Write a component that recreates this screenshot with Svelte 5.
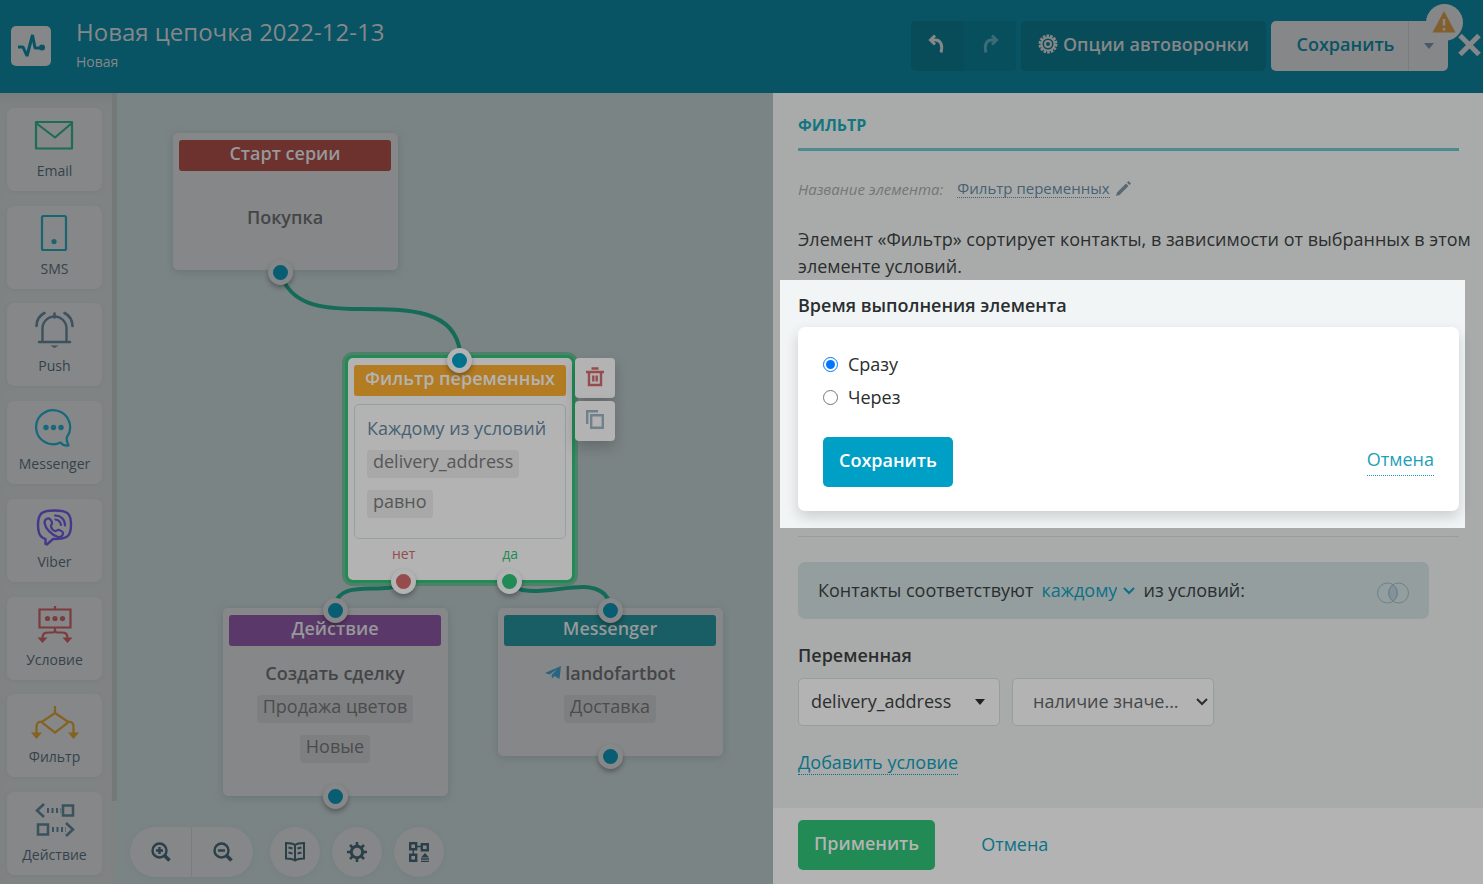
<script>
    let when = 'now';

    const tools = [
        { id: 'email', name: 'Email' },
        { id: 'sms', name: 'SMS' },
        { id: 'push', name: 'Push' },
        { id: 'messenger', name: 'Messenger' },
        { id: 'viber', name: 'Viber' },
        { id: 'condition', name: 'Условие' },
        { id: 'filter', name: 'Фильтр' },
        { id: 'action', name: 'Действие' }
    ];

    const nodes = [
        { type: 'start', title: 'Старт серии', text: 'Покупка', tags: [], x: 56, y: 40, w: 225, h: 137 },
        { type: 'filter', title: 'Фильтр переменных', text: 'Каждому из условий', tags: ['delivery_address', 'равно'], x: 231, y: 265, w: 224, h: 222 },
        { type: 'action', title: 'Действие', text: 'Создать сделку', tags: ['Продажа цветов', 'Новые'], x: 106, y: 515, w: 225, h: 188 },
        { type: 'messenger', title: 'Messenger', text: 'landofartbot', tags: ['Доставка'], x: 381, y: 515, w: 225, h: 148 }
    ];

    const edges = [
        'M163 179 C173 212 203 216 243 216 C293 216 338 217 343 259',
        'M286 490 C268 503 223 485 218 512',
        'M392 488 C403 507 443 493 468 494 C483 495 491 502 493 512'
    ];

    const ports = [
        { x: 163, y: 179, kind: 'dim' },
        { x: 342, y: 267, kind: 'in' },
        { x: 286, y: 488, kind: 'no' },
        { x: 392, y: 488, kind: 'yes' },
        { x: 218, y: 517, kind: 'dim' },
        { x: 493, y: 517, kind: 'dim' },
        { x: 218, y: 703, kind: 'dim' },
        { x: 493, y: 663, kind: 'dim' }
    ];
</script>

<div class="app">
    <header>
        <div class="logo">
            <svg width="40" height="40" viewBox="0 0 40 40" fill="none" stroke="#085464" stroke-width="3">
                <path d="M7 21h5l4 9 5.500-21 2.500 13h6" stroke-linejoin="bevel" />
                <circle cx="31" cy="21.500" r="3" fill="#085464" stroke="none" />
            </svg>
        </div>
        <div class="title">
            <h1>Новая цепочка 2022-12-13</h1>
            <span>Новая</span>
        </div>
        <div class="actions">
            <div class="history">
                <button aria-label="Отменить действие">
                    <svg width="18" height="20" viewBox="0 0 18 20" fill="none" stroke="#868789" stroke-width="3">
                        <path d="M7 1.500 2.500 6 7 10.500M3 6h4.500c5 0 7.500 5 5.500 12.500" />
                    </svg>
                </button>
                <button class="redo" aria-label="Повторить действие">
                    <svg width="18" height="20" viewBox="0 0 18 20" fill="none" stroke="#3d6b76" stroke-width="3">
                        <path d="M11 1.500 15.500 6 11 10.500M15 6h-4.500c-5 0-7.500 5-5.500 12.500" />
                    </svg>
                </button>
            </div>
            <button class="options">
                <svg width="20" height="20" viewBox="0 0 20 20" fill="none" stroke="#868789">
                    <circle cx="10" cy="10" r="8" stroke-width="3" stroke-dasharray="2.500 1.100" />
                    <circle cx="10" cy="10" r="6.500" stroke-width="2" />
                    <circle cx="10" cy="10" r="3" stroke-width="2" />
                </svg>
                Опции автоворонки
            </button>
            <div class="save">
                <button>Сохранить</button>
                <button class="more" aria-label="Ещё">
                    <svg width="10" height="6" viewBox="0 0 10 6"><path d="M0 0h10L5 6z" fill="#465a6b" /></svg>
                </button>
                <span class="warning">
                    <svg width="24" height="22" viewBox="0 0 24 22">
                        <path d="M12 0 23.500 21.500H.5z" fill="#835f2e" />
                        <path d="M12 8v6.500M12 17v2.500" stroke="#868789" stroke-width="2.500" />
                    </svg>
                </span>
            </div>
            <button class="close" aria-label="Закрыть">
                <svg width="23" height="24" viewBox="0 0 23 24" stroke="#868789" stroke-width="5">
                    <path d="m2 2.500 19 19m0-19-19 19" />
                </svg>
            </button>
        </div>
    </header>

    <main>
        <nav>
            <div class="tools">
                {#each tools as tool}
                    <button class="tool">
                        <svg width="48" height="40" viewBox="1 0 48 40" fill="none" stroke-width="2.200" class={tool.id}>
                            {#if tool.id === 'email'}
                                <path d="M6 7h36v26.500H6zM6 8l19 14.500L42 8" stroke-linejoin="round" />
                            {:else if tool.id === 'sms'}
                                <rect x="12" y="3" width="24" height="34" rx="1.500" />
                                <circle cx="24" cy="28.500" r="2.600" fill="currentColor" stroke="none" />
                            {:else if tool.id === 'push'}
                                <path d="M9 32h31M12.500 31V18.500a12 12 0 0 1 24 0V31" stroke-width="2.400" stroke-linecap="round" />
                                <path d="M24.500 3.500v4M6.500 16c0-6 3-10.500 8-13M42.500 16c0-6-3-10.500-8-13" stroke-width="2.600" stroke-linecap="round" />
                                <path d="M20.500 35.500h8l-4 2.500z" fill="currentColor" stroke="none" />
                            {:else if tool.id === 'messenger'}
                                <path d="M30.500 35.500a17 17 0 1 1 6.500-5.500c-1 2 0 5 1.500 8.500-4 .5-6-.5-8-3z" transform="translate(0 -1)" stroke-linejoin="round" />
                                <circle cx="16" cy="19.500" r="2.700" fill="currentColor" stroke="none" />
                                <circle cx="23.500" cy="19.500" r="2.700" fill="currentColor" stroke="none" />
                                <circle cx="31" cy="19.500" r="2.700" fill="currentColor" stroke="none" />
                            {:else if tool.id === 'viber'}
                                <path d="M13 32c-4-2-5-6-5-13 0-12 4-14.500 16.500-14.500S41 7 41 18.500 38 33 23 33l-6 5.500-1.500-.5v-5z" stroke-width="2.400" />
                                <path d="M17.500 12.500c2-.8 4 2 4.500 4s-1.500 2-1 4 2 4 4 4.500 2.500-1.500 4-1 4.500 2 4 4-3 3.500-5 3c-7-2.500-12.500-8.500-13.500-14 0-2 1.500-4 3-4.500z" />
                                <path d="M25 9.500c6 0 10 4 10 10M25.500 13.500c3.500.5 5 2.500 5.500 5.500" stroke-linecap="round" />
                            {:else if tool.id === 'condition'}
                                <path d="M9.500 5.500h31v18h-31zM25 2v4M25 24v4M25 26c0 3-2 2.500-6 2.500-5 0-6.500 1-6.500 6M25 26c0 3 2 2.500 6 2.500 5 0 6.500 1 6.500 6" />
                                <path d="M7.500 33.500h10L12.500 39zM32.500 33.500h10l-5 5.500z" fill="currentColor" stroke="none" />
                                <circle cx="17.500" cy="14.500" r="2.600" fill="currentColor" stroke="none" />
                                <circle cx="25" cy="14.500" r="2.600" fill="currentColor" stroke="none" />
                                <circle cx="32.500" cy="14.500" r="2.600" fill="currentColor" stroke="none" />
                            {:else if tool.id === 'filter'}
                                <path d="M25 5v7M25 12l13.500 9L25 31.500 11.500 21zM12 20.500c-4 0-5.500 1.500-5.500 5V33M38 20.500c4 0 5.500 1.500 5.500 5V33" />
                                <path d="M1 31.500h11L6.500 38zM38 31.500h11L43.500 38z" fill="currentColor" stroke="none" />
                            {:else}
                                <path d="m14 5-7 6.500 7 6.500M33 6.500h10v10H33zM8 25.500h10v10H8zM36 24l7 6.500-7 6.500" stroke-width="2.500" />
                                <path d="M17 11.500h14M22 30.500h14" stroke-width="5" stroke-dasharray="2 2.500" />
                            {/if}
                        </svg>
                        <span>{tool.name}</span>
                    </button>
                {/each}
            </div>
            <div class="track"></div>
        </nav>

        <section class="canvas">
            <svg class="edges" width="656" height="791" fill="none" stroke="#166b58" stroke-width="4">
                {#each edges as d}
                    <path {d} />
                {/each}
            </svg>

            {#each nodes as node}
                <article class="node {node.type}" style="left: {node.x}px; top: {node.y}px; width: {node.w}px; height: {node.h}px">
                    <h2>{node.title}</h2>
                    <div class="body">
                        <p>
                            {#if node.type === 'messenger'}
                                <svg width="16" height="14" viewBox="0 0 16 14">
                                    <path d="M0 7 16 0l-1.500 13-5-3-2.500 2.500-.5-3.500L12.500 3 4.500 8.500z" fill="#2b6480" />
                                </svg>
                            {/if}
                            {node.text}
                        </p>
                        {#each node.tags as tag}
                            <span class="tag">{tag}</span>
                        {/each}
                    </div>
                    {#if node.type === 'filter'}
                        <div class="outs"><span>нет</span><span class="yes">да</span></div>
                        <div class="node-actions">
                            <button aria-label="Удалить">
                                <svg width="20" height="20" viewBox="0 0 20 20" fill="none" stroke="#964b4d" stroke-width="2.400">
                                    <path d="M1 5h18M6.500 1.500h7M4 5v13h12V5M8.300 8.500v6M11.700 8.500v6" />
                                </svg>
                            </button>
                            <button aria-label="Копировать">
                                <svg width="20" height="20" viewBox="0 0 20 20" fill="none" stroke="#6f828b" stroke-width="2.400">
                                    <path d="M2.200 14V1.200H13M6.200 5.200h11.600v12.600H6.200z" />
                                </svg>
                            </button>
                        </div>
                    {/if}
                </article>
            {/each}

            {#each ports as port}
                <i class="port {port.kind}" style="left: {port.x}px; top: {port.y}px"></i>
            {/each}

            <div class="toolbar">
                <div class="zoom">
                    <button aria-label="Увеличить">
                        <svg width="20" height="20" viewBox="0 0 20 20" fill="none" stroke="#2b3f49" stroke-width="2.400">
                            <circle cx="8.500" cy="8.500" r="7" />
                            <path d="M8.500 5v7M5 8.500h7" />
                            <path d="m13.500 13.500 5 5" stroke-width="3.500" />
                        </svg>
                    </button>
                    <button aria-label="Уменьшить">
                        <svg width="20" height="20" viewBox="0 0 20 20" fill="none" stroke="#2b3f49" stroke-width="2.400">
                            <circle cx="8.500" cy="8.500" r="7" />
                            <path d="M5 8.500h7" />
                            <path d="m13.500 13.500 5 5" stroke-width="3.500" />
                        </svg>
                    </button>
                </div>
                <button class="round" aria-label="Справка">
                    <svg width="20" height="20" viewBox="0 0 20 20" fill="none" stroke="#2b3f49" stroke-width="2">
                        <path d="M10 3C7.500 1.200 4 1 1 1v15.500c3 0 6.500.3 9 2 2.500-1.700 6-2 9-2V1c-3 0-6.500.2-9 2zv15" />
                        <path d="m3.500 5.500 4 1m-4 4 4 1m9-6-4 1m4 4-4 1" />
                    </svg>
                </button>
                <button class="round" aria-label="Настройки">
                    <svg width="20" height="20" viewBox="0 0 20 20" fill="none" stroke="#2b3f49">
                        <circle cx="10" cy="10" r="5.700" stroke-width="3" />
                        <path d="M10 0v4M10 16v4M0 10h4M16 10h4M3 3l3 3M14 14l3 3M3 17l3-3M14 6l3-3" stroke-width="2.600" />
                    </svg>
                </button>
                <button class="round" aria-label="Упорядочить">
                    <svg width="20" height="20" viewBox="0 0 20 20" fill="none" stroke="#2b3f49" stroke-width="2.400">
                        <path d="M1.200 1.200h6v6h-6zM12.800 2.200h6v6h-6zM1.200 12.800h6v6h-6z" />
                        <path d="M8 4.500h4M4.200 8v4M12 17h8M12 19.500h8" stroke-width="1.400" />
                        <path d="M12 15.500h8l-4-4.500z" fill="#2b3f49" stroke="none" />
                    </svg>
                </button>
            </div>
        </section>

        <aside>
            <div class="settings">
                <h3>ФИЛЬТР</h3>
                <div class="name">
                    <em>Название элемента:</em>
                    <a href="#rename">Фильтр переменных</a>
                    <svg width="15" height="15" viewBox="0 0 15 15" fill="#566975">
                        <path d="M0 15 1 11.500 10 2.500 12.500 5 3.500 14zM11 1.500 12.500 0 15 2.500 13.500 4z" />
                    </svg>
                </div>
                <p class="about">Элемент «Фильтр» сортирует контакты, в зависимости от выбранных в этом элементе условий.</p>

                <div class="timing">
                    <h4>Время выполнения элемента</h4>
                    <form class="card">
                        <label><input type="radio" name="when" value="now" bind:group={when} />Сразу</label>
                        <label><input type="radio" name="when" value="later" bind:group={when} />Через</label>
                        <div class="row">
                            <button type="button">Сохранить</button>
                            <a href="#cancel">Отмена</a>
                        </div>
                    </form>
                </div>

                <hr />

                <div class="match">
                    <label for="match">Контакты соответствуют</label>
                    <span class="select">
                        <select id="match"><option>каждому</option></select>
                        <svg width="12" height="8" viewBox="0 0 12 8" fill="none" stroke="#0a7186" stroke-width="2"><path d="m1 1 5 5 5-5" /></svg>
                    </span>
                    <span>из условий:</span>
                    <svg class="venn" width="32" height="22" viewBox="0 0 32 22" fill="none" stroke="#6f828b">
                        <path d="M16 3a10 10 0 0 1 0 16 10 10 0 0 1 0-16z" fill="#84929a" />
                        <circle cx="10.500" cy="11" r="10" />
                        <circle cx="21.500" cy="11" r="10" />
                    </svg>
                </div>

                <label class="caption" for="variable">Переменная</label>
                <div class="fields">
                    <span class="select">
                        <select id="variable"><option>delivery_address</option></select>
                        <svg width="10" height="6" viewBox="0 0 10 6"><path d="M0 0h10L5 6z" fill="#1f2223" /></svg>
                    </span>
                    <span class="select">
                        <select class="rule" aria-label="Правило"><option>наличие значе...</option></select>
                        <svg width="12" height="8" viewBox="0 0 12 8" fill="none" stroke="#2b2e2f" stroke-width="2"><path d="m1 1 5 5 5-5" /></svg>
                    </span>
                </div>
                <a class="add" href="#add">Добавить условие</a>
            </div>
            <footer>
                <button>Применить</button>
                <a href="#close">Отмена</a>
            </footer>
        </aside>
    </main>
</div>

<style>
    :global(body) {
        font-family: "Open Sans", "Noto Sans", sans-serif;
        font-size: 18px;
        line-height: 27px;
        color: #2b2e2f;
    }

    * {
        box-sizing: border-box;
    }

    h1, h2, h3, h4, p {
        margin: 0;
    }

    button, select {
        font: inherit;
        color: inherit;
        border: 0;
        padding: 0;
        margin: 0;
        background: none;
        cursor: pointer;
    }

    svg {
        flex: none;
    }

    a {
        color: #0a7186;
        text-decoration: none;
    }

    .app {
        min-height: 100vh;
        display: flex;
        flex-direction: column;
    }

    header {
        height: 93px;
        display: flex;
        align-items: flex-start;
        padding: 0 2px 0 11px;
        background: #085464;
        color: #868789;
    }

    .logo {
        width: 40px;
        height: 40px;
        margin-top: 26px;
        border-radius: 5px;
        background: #868789;
    }

    .title {
        flex: 1;
        margin: 16px 0 0 25px;
    }

    .title h1 {
        font-size: 24px;
        line-height: 32px;
        font-weight: 400;
    }

    .title span {
        display: block;
        font-size: 14px;
    }

    .actions {
        display: flex;
        gap: 5px;
        margin-top: 21px;
        font-weight: 600;
    }

    .actions button {
        height: 50px;
        display: flex;
        align-items: center;
        justify-content: center;
        padding-bottom: 4px;
    }

    .history {
        display: flex;
        width: 105px;
        border-radius: 5px;
        overflow: hidden;
        background: #084b59;
    }

    .history button {
        flex: 1;
    }

    .actions .redo {
        background: #084f5e;
    }

    .options {
        width: 245px;
        gap: 5px;
        border-radius: 5px;
        background: #084b59;
    }

    .save {
        position: relative;
        display: flex;
        width: 177px;
        border-radius: 5px;
        background: #868789;
        color: #085464;
    }

    .save button {
        flex: 1;
        padding-left: 12px;
    }

    .save .more {
        flex: none;
        width: 40px;
        padding: 0;
        border-left: 1px solid #7a7c7e;
    }

    .warning {
        position: absolute;
        top: -17px;
        right: -15px;
        width: 37px;
        height: 37px;
        display: flex;
        align-items: center;
        justify-content: center;
        padding: 0 2px 2px 0;
        border-radius: 50%;
        background: #868789;
    }

    .actions .close {
        margin-left: 5px;
        padding-bottom: 2px;
    }

    main {
        flex: 1;
        display: flex;
    }

    nav {
        width: 117px;
        display: flex;
        justify-content: space-between;
        background: #7f8384;
        box-shadow: inset 0 12px 12px -8px #777a7b;
    }

    .tools {
        display: flex;
        flex-direction: column;
        justify-content: space-between;
        padding: 15px 0 9px 7px;
    }

    .tool {
        width: 95px;
        height: 83px;
        display: flex;
        flex-direction: column;
        align-items: center;
        padding-top: 7px;
        border-radius: 7px;
        background: #868789;
        box-shadow: 0 1px 3px #7a7d7e;
        font-size: 14px;
        line-height: 32px;
        color: #34434b;
    }

    .tool svg {
        stroke: currentColor;
    }

    .email { color: #1d6d51; }
    .sms { color: #186571; }
    .push { color: #3c525e; }
    .messenger { color: #14697c; }
    .viber { color: #45378a; }
    .condition { color: #7c3b3d; }
    .filter { color: #84621f; }
    .action { color: #3a515e; }

    .track {
        width: 5px;
        height: 708px;
        background: #747879;
    }

    .canvas {
        position: relative;
        flex: 1;
        background: #7b8485;
        overflow: hidden;
    }

    .edges {
        position: absolute;
        top: 0;
        left: 0;
    }

    .node {
        position: absolute;
        padding: 7px 7px 7px 6px;
        border-radius: 5px;
        background: #868789;
        box-shadow: 0 2px 8px #6b7475;
        text-align: center;
        color: #444546;
    }

    .node h2 {
        height: 31px;
        border-radius: 3px;
        font-size: 18px;
        line-height: 26px;
        font-weight: 600;
        color: #96989a;
    }

    .start h2 { background: #6d322e; }
    .action h2 { background: #5b386a; }
    .messenger h2 { background: #185e64; }

    .filter h2 {
        background: #b37b22;
        color: #b3b3b3;
    }

    .body {
        display: flex;
        flex-direction: column;
        align-items: center;
        gap: 12px;
        padding-top: 14px;
    }

    .body p {
        margin-bottom: -4px;
        font-weight: 600;
    }

    .start .body {
        padding-top: 33px;
    }

    .tag {
        height: 28px;
        padding: 0 6px;
        border-radius: 4px;
        background: #7e7f81;
        line-height: 23px;
        color: #4b4c4d;
    }

    .node.filter {
        padding-right: 6px;
        background: #b3b3b3;
        box-shadow: 0 0 0 3px #218a55, 0 0 0 6px #4f8069;
    }

    .filter .body {
        height: 135px;
        margin-top: 8px;
        padding: 10px 12px;
        align-items: flex-start;
        border: 1px solid #94a1a3;
        border-radius: 5px;
    }

    .filter .body p {
        font-weight: 400;
        color: #476172;
    }

    .filter .tag {
        background: #a8a8a8;
        color: #565757;
    }

    .outs {
        display: flex;
        justify-content: space-between;
        padding: 1px 48px 0 38px;
        font-size: 14px;
        color: #964b4d;
    }

    .outs .yes {
        color: #218a55;
    }

    .node-actions {
        position: absolute;
        top: 0;
        left: 227px;
        display: flex;
        flex-direction: column;
        gap: 3px;
    }

    .node-actions button {
        width: 40px;
        height: 40px;
        display: flex;
        align-items: center;
        justify-content: center;
        padding-bottom: 2px;
        border-radius: 4px;
        background: #b3b3b3;
        box-shadow: 0 6px 14px rgba(0, 0, 0, 0.2);
    }

    .port {
        position: absolute;
        width: 25px;
        height: 25px;
        margin: -12px;
        border: 5px solid #b3b3b3;
        border-radius: 50%;
        background: #00728c;
        box-shadow: 0 3px 5px rgba(0, 0, 0, 0.3);
    }

    .port.dim {
        border-color: #868789;
        background: #085d72;
    }

    .port.no { background: #964b4d; }
    .port.yes { background: #218a55; }

    .toolbar {
        position: absolute;
        left: 13px;
        bottom: 7px;
        display: flex;
        gap: 12px;
    }

    .toolbar button {
        height: 50px;
        display: flex;
        align-items: center;
        justify-content: center;
    }

    .zoom, .round {
        border-radius: 25px;
        background: #868789;
        box-shadow: 0 1px 5px #757e7f;
    }

    .zoom {
        display: flex;
        width: 123px;
        margin-right: 5px;
    }

    .zoom button {
        flex: 1;
    }

    .zoom button + button {
        border-left: 1px solid #7a7d7e;
    }

    .toolbar .round {
        width: 50px;
        background: #868789;
    }

    aside {
        width: 710px;
        display: flex;
        flex-direction: column;
        background: #a9abaa;
    }

    .settings {
        flex: 1;
        padding: 19px 24px 0 25px;
    }

    h3 {
        padding-bottom: 9px;
        border-bottom: 3px solid #4b8a90;
        font-size: 16px;
        line-height: 27px;
        font-weight: 700;
        color: #13767f;
    }

    .name {
        display: flex;
        align-items: center;
        gap: 6px;
        margin: 28px 0;
        font-size: 15px;
        line-height: 18px;
    }

    .name em {
        margin-right: 8px;
        color: #737576;
    }

    .name a {
        border-bottom: 1px dotted #476172;
        color: #476172;
    }

    .about {
        margin-right: -16px;
    }

    .timing {
        margin: 0 -6px 0 -18px;
        padding: 12px 6px 17px 18px;
        background: #f1f5f6;
    }

    h4, .caption {
        display: block;
        font-size: 18px;
        font-weight: 600;
    }

    .card {
        height: 184px;
        margin-top: 8px;
        padding: 21px 25px 25px;
        border-radius: 7px;
        background: #fff;
        box-shadow: 0 6px 14px rgba(0, 0, 0, 0.16);
    }

    .card label {
        height: 33px;
        display: flex;
        align-items: center;
        gap: 10px;
    }

    .card input {
        width: 15px;
        height: 15px;
        margin: 0;
    }

    .row {
        display: flex;
        justify-content: space-between;
        align-items: flex-start;
        margin-top: 23px;
    }

    .row button, footer button {
        height: 50px;
        padding: 0 16px 4px;
        border-radius: 5px;
        background: #00a0c6;
        font-weight: 600;
        color: #fff;
    }

    .row a {
        margin-top: 9px;
        padding-bottom: 2px;
        border-bottom: 1px dotted #1c9fb8;
        color: #1c9fb8;
    }

    hr {
        margin: 8px 0 25px;
        border: 0;
        border-top: 1px solid #949e9f;
    }

    .match {
        height: 57px;
        display: flex;
        align-items: center;
        gap: 8px;
        margin-right: 30px;
        padding: 0 20px;
        border-radius: 7px;
        background: #949e9f;
    }

    .venn {
        margin: 5px 0 0 auto;
    }

    .select {
        position: relative;
        display: flex;
        align-items: center;
    }

    .select select {
        appearance: none;
    }

    .select svg {
        position: absolute;
        right: 0;
        pointer-events: none;
    }

    .match select {
        padding-right: 18px;
        color: #0a7186;
    }

    .caption {
        margin: 23px 0 9px;
    }

    .fields {
        display: flex;
        gap: 12px;
        margin-bottom: 23px;
    }

    .fields select {
        width: 202px;
        height: 48px;
        padding: 0 30px 2px 12px;
        border: 1px solid #949e9f;
        border-radius: 5px;
        background: #b3b3b3;
    }

    .fields .rule {
        padding-left: 20px;
        color: #444849;
    }

    .fields svg {
        right: 15px;
    }

    .fields .rule + svg {
        right: 6px;
    }

    .add {
        display: inline-block;
        line-height: 24px;
        border-bottom: 1px dotted #0a7186;
    }

    footer {
        height: 76px;
        display: flex;
        align-items: center;
        gap: 46px;
        padding: 0 25px 2px;
        background: #b3b3b3;
    }

    footer button {
        background: #218a55;
        color: #b3b3b3;
    }

    footer a {
        padding-bottom: 2px;
    }
</style>
